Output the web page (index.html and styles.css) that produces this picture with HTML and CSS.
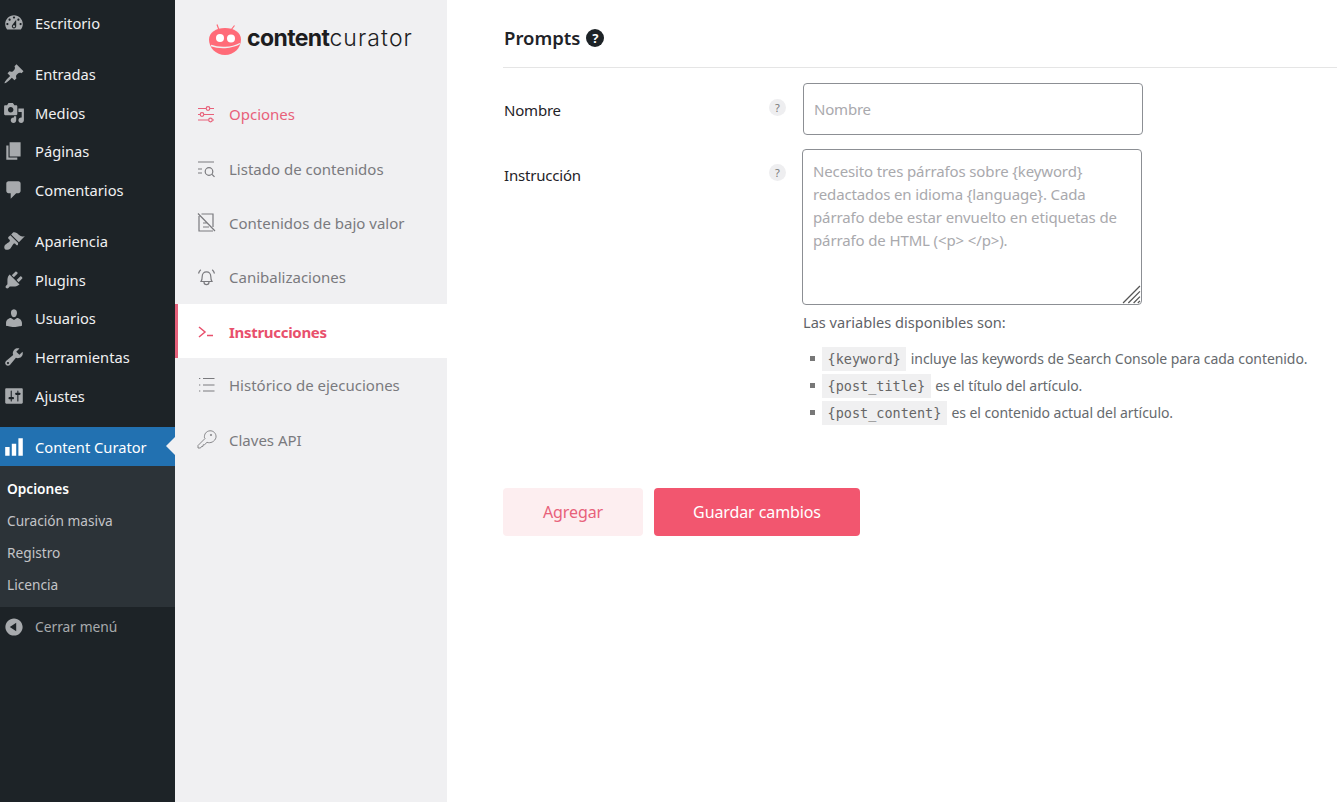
FILE: index.html
```html
<!DOCTYPE html>
<html lang="es">
<head>
<meta charset="utf-8">
<title>Content Curator</title>
<link rel="stylesheet" href="styles.css">
</head>
<body>
<div class="page">
  <nav class="wp-menu">
    <a class="wp-item first"><svg class="dash" viewBox="0 0 20 20"><path d="M3.76 16h12.48c1.1-1.37 1.76-3.11 1.76-5 0-4.42-3.58-8-8-8s-8 3.58-8 8c0 1.89.66 3.63 1.76 5zM10 4c.55 0 1 .45 1 1s-.45 1-1 1-1-.45-1-1 .45-1 1-1zM6 6c.55 0 1 .45 1 1s-.45 1-1 1-1-.45-1-1 .45-1 1-1zm8 0c.55 0 1 .45 1 1s-.45 1-1 1-1-.45-1-1 .45-1 1-1zm-5.37 5.55L12 7v6c0 1.1-.9 2-2 2s-2-.9-2-2c0-.57.24-1.08.63-1.45zM4 10c.55 0 1 .45 1 1s-.45 1-1 1-1-.45-1-1 .45-1 1-1zm12 0c.55 0 1 .45 1 1s-.45 1-1 1-1-.45-1-1 .45-1 1-1zm-5 3c0-.55-.45-1-1-1s-1 .45-1 1 .45 1 1 1 1-.45 1-1z"/></svg><span>Escritorio</span></a>
    <div class="wp-sep"></div>
    <a class="wp-item"><svg class="dash" viewBox="0 0 20 20"><path d="M10.44 3.02l1.82-1.82 6.36 6.35-1.83 1.82c-1.05-.68-2.48-.57-3.41.36l-.75.75c-.92.93-1.04 2.35-.35 3.41l-1.83 1.82-2.41-2.41-2.8 2.79c-.42.42-3.38 2.71-3.8 2.29s1.86-3.39 2.28-3.81l2.79-2.79L4.1 9.36l1.83-1.82c1.05.69 2.48.57 3.4-.36l.75-.75c.93-.92 1.05-2.35.36-3.41z"/></svg><span>Entradas</span></a>
    <a class="wp-item"><svg class="dash" viewBox="0 0 20 20"><path d="M13 11V4c0-.55-.45-1-1-1h-1.67L9 1H5L3.67 3H2c-.55 0-1 .45-1 1v7c0 .55.45 1 1 1h10c.55 0 1-.45 1-1zM7 4.5c1.38 0 2.5 1.12 2.5 2.5S8.38 9.5 7 9.5 4.5 8.38 4.5 7 5.62 4.5 7 4.5zM14 6h5v10.5c0 1.38-1.12 2.5-2.5 2.5S14 17.88 14 16.5s1.12-2.5 2.5-2.5c.17 0 .34.02.5.05V9h-3V6zm-4 8.05V13h2v3.5c0 1.38-1.12 2.5-2.5 2.5S7 17.88 7 16.5 8.12 14 9.5 14c.17 0 .34.02.5.05z"/></svg><span>Medios</span></a>
    <a class="wp-item"><svg class="dash" viewBox="0 0 20 20"><path d="M6 15V2h10v13H6zm-1 1h8v2H3V5h2v11z"/></svg><span>Páginas</span></a>
    <a class="wp-item"><svg class="dash" viewBox="0 0 20 20"><path d="M5 2h9c1.1 0 2 .9 2 2v7c0 1.1-.9 2-2 2h-2l-5 5v-5H5c-1.1 0-2-.9-2-2V4c0-1.1.9-2 2-2z"/></svg><span>Comentarios</span></a>
    <div class="wp-sep"></div>
    <a class="wp-item"><svg class="dash" viewBox="0 0 20 20"><path d="M14.48 11.06L7.41 3.99l1.5-1.5c.5-.56 2.3-.47 3.51.32 1.21.8 1.43 1.28 2.91 2.1 1.18.64 2.45 1.26 4.45.85zm-.71.71L6.7 4.7 4.93 6.47c-.39.39-.39 1.02 0 1.41l1.06 1.06c.39.39.39 1.03 0 1.42-.6.6-1.43 1.11-2.21 1.69-.35.26-.7.53-1.01.84C1.43 13.23.5 16.09 1.8 17.4c1.32 1.3 3.76.45 5.1-.9.42-.42.74-.91 1.04-1.42.57-.97 1.05-1.99 1.71-2.55.39-.39 1.03-.39 1.42 0l1.06 1.06c.39.39 1.02.39 1.41 0z"/></svg><span>Apariencia</span></a>
    <a class="wp-item"><svg class="dash" viewBox="0 0 20 20"><path d="M13.11 4.36L9.87 7.6 8 5.73l3.24-3.24c.35-.34 1.05-.2 1.56.32.52.51.66 1.21.31 1.55zm-8 1.77l.91-1.12 9.01 9.01-1.19.84c-.71.71-2.63 1.16-3.82 1.16H6.14L4.9 17.26c-.59.59-1.54.59-2.12 0-.59-.58-.59-1.53 0-2.12l1.24-1.24v-3.88c0-1.13.4-3.19 1.09-3.89zm7.26 3.97l3.24-3.24c.34-.35 1.04-.21 1.55.31.52.51.66 1.21.31 1.55l-3.24 3.25z"/></svg><span>Plugins</span></a>
    <a class="wp-item"><svg class="dash" viewBox="0 0 20 20"><path d="M10 9.25c-2.27 0-2.73-3.44-2.73-3.44C7 4.02 7.82 2 9.97 2c2.16 0 2.98 2.02 2.71 3.81 0 0-.41 3.44-2.68 3.44zm0 2.57L12.72 10c2.39 0 4.52 2.33 4.52 4.53v2.49s-3.65 1.13-7.24 1.13c-3.65 0-7.24-1.13-7.24-1.13v-2.49c0-2.25 1.94-4.48 4.47-4.48z"/></svg><span>Usuarios</span></a>
    <a class="wp-item"><svg class="dash" viewBox="0 0 20 20"><path d="M16.68 9.77c-1.34 1.34-3.3 1.67-4.95.99l-5.41 6.52c-.99.99-2.59.99-3.58 0s-.99-2.59 0-3.57l6.52-5.42c-.68-1.65-.35-3.61.99-4.95 1.28-1.28 3.12-1.62 4.72-1.06l-2.89 2.89 2.82 2.82 2.86-2.87c.53 1.58.18 3.39-1.08 4.65zM3.81 16.21c.4.39 1.04.39 1.43 0 .4-.4.4-1.04 0-1.43-.39-.4-1.03-.4-1.43 0-.39.39-.39 1.03 0 1.43z"/></svg><span>Herramientas</span></a>
    <a class="wp-item"><svg class="dash" viewBox="0 0 20 20"><path d="M18 16V4c0-.55-.45-1-1-1H3c-.55 0-1 .45-1 1v12c0 .55.45 1 1 1h14c.55 0 1-.45 1-1zM8 11h1c.55 0 1 .45 1 1s-.45 1-1 1H8v1.5c0 .28-.22.5-.5.5s-.5-.22-.5-.5V13H6c-.55 0-1-.45-1-1s.45-1 1-1h1V5.5c0-.28.22-.5.5-.5s.5.22.5.5V11zm5-2h-1c-.55 0-1-.45-1-1s.45-1 1-1h1V5.5c0-.28.22-.5.5-.5s.5.22.5.5V7h1c.55 0 1 .45 1 1s-.45 1-1 1h-1v5.5c0 .28-.22.5-.5.5s-.5-.22-.5-.5V9z"/></svg><span>Ajustes</span></a>
    <div class="wp-sep"></div>
    <a class="wp-item current"><svg class="dash" viewBox="0 0 20 20"><path d="M18 18V2h-4v16h4zm-6 0V7H8v11h4zm-6 0v-8H2v8h4z"/></svg><span>Content Curator</span></a>
    <ul class="wp-sub">
      <li class="sub-on">Opciones</li>
      <li>Curación masiva</li>
      <li>Registro</li>
      <li>Licencia</li>
    </ul>
    <a class="wp-item collapse"><svg class="dash" viewBox="0 0 20 20"><path d="M10 2.16c4.33 0 7.84 3.51 7.84 7.84s-3.51 7.84-7.84 7.84S2.16 14.33 2.16 10 5.71 2.16 10 2.16zm2 11.72V6.12L6.18 9.97z"/></svg><span>Cerrar menú</span></a>
  </nav>

  <aside class="plugin-nav">
    <div class="logo">
      <svg class="logo-mark" viewBox="0 0 34 34">
        <path class="ant" d="M11 7 9 1.500M23 7l3.500-4.500"/>
        <path class="bot" d="M17 5c9 0 16 4.600 16 11.500C33 25 26 32 17 32S1 25 1 16.500C1 9.600 8 5 17 5z"/>
        <circle class="eye" cx="12" cy="15" r="4"/>
        <circle class="eye" cx="23" cy="15.500" r="4"/>
        <path class="smile" d="M3 22.500c8 3 20 3 29-2"/>
      </svg>
      <span class="logo-text"><b>content</b><i>curator</i></span>
    </div>
    <a class="pn-item on-page">
      <svg class="pn-icon" viewBox="0 0 20 20"><path d="M1 4.500h8M13 4.500h4M1 10.500h2M7 10.500h10M1 16h10.500M15.500 16H17"/><circle cx="11" cy="4.500" r="1.800"/><circle cx="5" cy="10.500" r="1.800"/><circle cx="13.500" cy="16" r="1.800"/></svg>
      <span>Opciones</span>
    </a>
    <a class="pn-item">
      <svg class="pn-icon" viewBox="0 0 20 20"><path d="M1 3h16M1 10h4M1 14h4"/><circle cx="12" cy="12.500" r="3.800"/><path d="m15 15.300 2.500 2.500"/></svg>
      <span>Listado de contenidos</span>
    </a>
    <a class="pn-item">
      <svg class="pn-icon" viewBox="0 0 20 20"><path d="M4.500 1H16v13M16 18H2V3M6 10h4M6 14h6M1 .5 18 18"/></svg>
      <span>Contenidos de bajo valor</span>
    </a>
    <a class="pn-item">
      <svg class="pn-icon" viewBox="0 0 20 20"><path d="M4 14.500c1-1.500 1.200-2.500 1.200-5 0-2.800 1.800-4.700 4.300-4.700s4.300 1.900 4.300 4.700c0 2.500.2 3.500 1.200 5zM7 15c0 3.500 5 3.500 5 0M1.500 6.500c.4-1.500 1.100-2.900 2.300-3.800M17.500 6.500c-.4-1.500-1.100-2.900-2.300-3.800"/></svg>
      <span>Canibalizaciones</span>
    </a>
    <a class="pn-item active">
      <svg class="pn-icon term" viewBox="0 0 20 20"><path d="m2 5 6 5-6 5M10 13.500h6"/></svg>
      <span>Instrucciones</span>
    </a>
    <a class="pn-item">
      <svg class="pn-icon" viewBox="0 0 20 20"><path d="M6 3.500h11.500M6 10h11.500M6 16h11.500M2 3.500h1.300M2 10h1.300M2 16h1.300"/></svg>
      <span>Histórico de ejecuciones</span>
    </a>
    <a class="pn-item">
      <svg class="pn-icon key" viewBox="0 0 20 20"><path d="M8 8.500 1 15.500V18h2.500l1-1.500 1.500-.2.2-1.500 1.500-.2 2.300-2.300c3.200 1.300 8-.5 9-5 .5-4-3-6.800-6-6.500-4 .3-6 3.500-5.500 7z"/><circle cx="14" cy="5" r=".7"/></svg>
      <span>Claves API</span>
    </a>
  </aside>

  <main class="content">
    <header class="head">
      <h1>Prompts</h1>
      <span class="head-help">?</span>
    </header>
    <div class="field field-name">
      <label class="f-label">Nombre</label>
      <span class="hint">?</span>
      <input class="f-input" type="text" placeholder="Nombre">
    </div>
    <div class="field field-prompt">
      <label class="f-label">Instrucción</label>
      <span class="hint">?</span>
      <div class="f-body">
        <div class="area-wrap">
          <textarea class="f-area" placeholder="Necesito tres párrafos sobre {keyword} redactados en idioma {language}. Cada párrafo debe estar envuelto en etiquetas de párrafo de HTML (<p> </p>)."></textarea>
          <svg class="grip" viewBox="0 0 18 18"><path d="M17 1 1 17M17 6 6 17M17 11 11 17M17 15l-2 2"/></svg>
        </div>
        <p class="vars-title">Las variables disponibles son:</p>
        <ul class="vars">
          <li><code>{keyword}</code> incluye las keywords de Search Console para cada contenido.</li>
          <li><code>{post_title}</code> es el título del artículo.</li>
          <li><code>{post_content}</code> es el contenido actual del artículo.</li>
        </ul>
      </div>
    </div>
    <div class="actions">
      <button class="btn btn-soft">Agregar</button>
      <button class="btn btn-main">Guardar cambios</button>
    </div>
  </main>
</div>
</body>
</html>
```
FILE: styles.css
```css
* { box-sizing: border-box; }
html, body { margin: 0; height: 100%; overflow: hidden; }
body { font-family: "Noto Sans", "Open Sans", sans-serif; background: #fff; }
.page { display: flex; height: 802px; }

/* WordPress admin menu */
.wp-menu { width: 175px; flex: none; background: #1d2327; padding-top: 3.9px; }
.wp-item { display: flex; align-items: center; height: 38.7px; padding-left: 3px; color: #f0f0f1; font-size: 14.700px; }
.wp-item span { margin-left: 10px; }
.dash { width: 22px; height: 22px; fill: #a7aaad; flex: none; }
.wp-sep { height: 12.2px; }
.wp-item.current { background: #2271b1; color: #fff; position: relative; height: 39px; }
.wp-item.current .dash { fill: #fff; }
.wp-item.current::after { content: ""; position: absolute; right: 0; top: 10px; border: 9px solid transparent; border-left-width: 0; border-right-color: #f0f0f2; }
.wp-sub { list-style: none; margin: 0; padding: 7px 0 5px; background: #2c3338; height: 141px; }
.wp-sub li { height: 32px; line-height: 32px; padding-left: 7px; color: #c3c4c7; font-size: 13.700px; }
.wp-sub .sub-on { color: #fff; font-weight: 600; }
.wp-item.collapse { color: #a7aaad; font-size: 13.800px; }

/* Plugin nav */
.plugin-nav { width: 272px; flex: none; background: #f0f0f2; }
.logo { height: 87.4px; display: flex; align-items: flex-start; padding: 23px 0 0 33px; }
.logo-mark { width: 34px; height: 34px; flex: none; }
.logo-mark .ant { fill: none; stroke: #ff6b78; stroke-width: 1.2; }
.logo-mark .bot { fill: #ff6b78; }
.logo-mark .eye { fill: #fff; }
.logo-mark .smile { fill: none; stroke: #f0f0f2; stroke-width: 1.4; }
.logo-text { font-family: "Inter", sans-serif; font-size: 23px; color: #1d1d1f; margin: 0 0 0 5px; line-height: 30px; }
.logo-text b { font-weight: 700; letter-spacing: -0.6px; }
.logo-text i { font-style: normal; font-weight: 300; letter-spacing: 1.1px; }
.pn-item { display: flex; align-items: center; height: 54.2px; padding-left: 22px; color: #7a7a7e; font-size: 15px; }
.pn-item span { margin-left: 12px; }
.pn-icon { width: 20px; height: 20px; fill: none; stroke: currentColor; stroke-width: 1.2; flex: none; }
.pn-icon.term { stroke-width: 1.5; }
.pn-icon.key { stroke-width: 0.9; }
.on-page { color: #e8617a; }
.active { background: #fff; color: #e8506c; font-weight: 700; letter-spacing: -0.3px; border-left: 3px solid #e5607a; padding: 1.500px 0 0 19px; }

/* Main */
.content { flex: 1; min-width: 0; padding-left: 56px; color: #1f2328; }
.head { height: 68px; border-bottom: 1px solid #e5e5e5; display: flex; align-items: center; padding: 8px 0 0 1px; }
.head h1 { margin: 0; font-size: 18.500px; font-weight: 600; }
.head-help { width: 18px; height: 18px; border-radius: 50%; background: #1d2327; color: #fff; font-size: 13px; font-weight: 700; line-height: 18px; text-align: center; margin-left: 6px; }
.field { display: flex; align-items: flex-start; }
.field-name { padding-top: 15px; }
.field-prompt { padding-top: 14px; }
.f-label { width: 266px; padding-left: 1px; font-size: 15px; letter-spacing: -0.2px; }
.field-name .f-label { padding-top: 17px; }
.field-prompt .f-label { padding-top: 16px; }
.hint { width: 17px; height: 17px; border-radius: 50%; background: #eeeef0; color: #777; font-size: 11px; line-height: 17px; text-align: center; margin: 16px 0 0 0; flex: none; }
.field-prompt .hint { margin-top: 15px; }
.f-input { width: 340px; height: 52px; margin-left: 17px; border: 1px solid #8c8f94; border-radius: 4px; padding: 0 10px; font: 15px "Noto Sans", sans-serif; letter-spacing: -0.2px; background: #fff; }
.f-input::placeholder, .f-area::placeholder { color: #a9a9ad; opacity: 1; }
.f-body { margin-left: 16px; width: 520px; }
.area-wrap { position: relative; width: 340px; height: 156px; }
.f-area { display: block; width: 340px; height: 156px; border: 1px solid #8c8f94; border-radius: 4px; padding: 10px; font: 15px/23px "Noto Sans", sans-serif; letter-spacing: -0.13px; resize: none; background: #fff; }
.grip { position: absolute; right: 1px; bottom: 1px; width: 19px; height: 19px; fill: none; stroke: #555; stroke-width: 1.2; }
.vars-title { margin: 8px 0 0 1px; font-size: 14.600px; color: #5f6368; line-height: 19px; }
.vars { list-style: none; margin: 13px 0 0; padding: 0 0 0 8px; color: #666a6e; font-size: 14px; letter-spacing: -0.06px; }
.vars li { display: flex; align-items: center; gap: 1px; height: 27px; position: relative; padding-left: 12px; white-space: pre; }
.vars li::before { content: ""; position: absolute; left: 0; top: 11px; width: 5px; height: 5px; background: #777; }
.vars code { background: #f0f0f1; font: 13.500px "DejaVu Sans Mono", monospace; letter-spacing: 0; padding: 4px 5.500px; color: #666; }
.actions { display: flex; gap: 11px; margin-top: 62px; }
.btn { height: 48px; border: 0; border-radius: 4px; font: 16px "Noto Sans", sans-serif; letter-spacing: -0.1px; }
.btn-soft { width: 140px; background: #fdeef0; color: #e8617a; }
.btn-main { width: 206px; background: #f2566f; color: #fff; }
```
